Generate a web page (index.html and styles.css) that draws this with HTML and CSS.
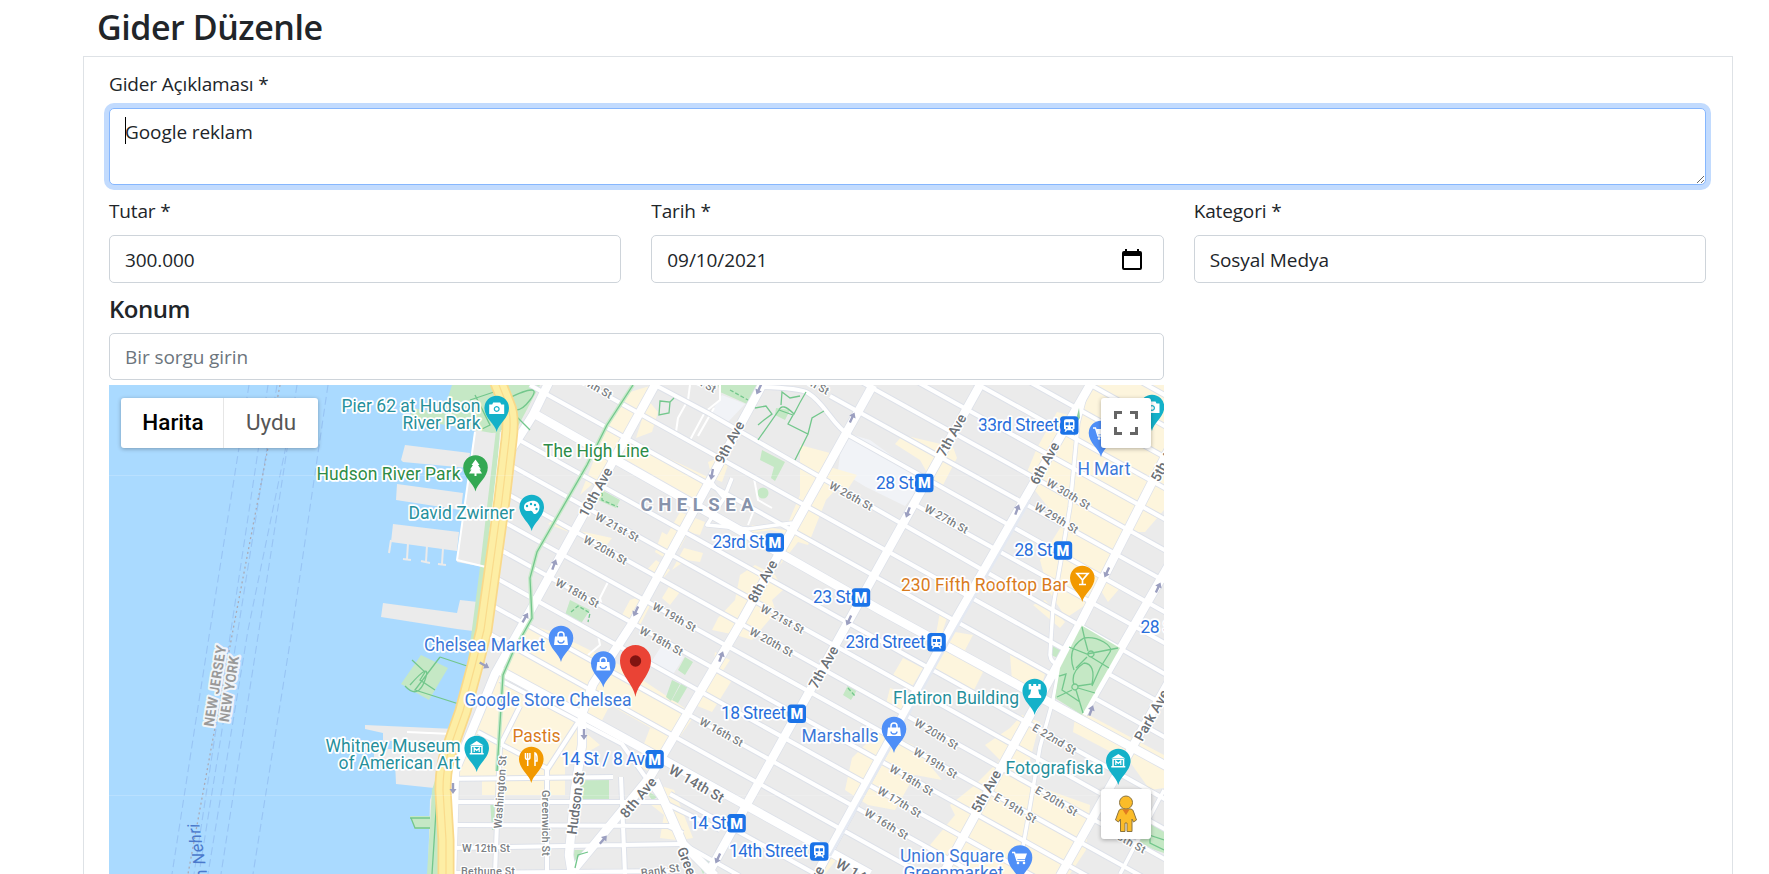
FILE: index.html
```html
<!DOCTYPE html>
<html lang="tr">
<head>
<meta charset="utf-8">
<title>Gider Düzenle</title>
<link rel="stylesheet" href="styles.css">
</head>
<body>
<main class="page">
<h1 class="title">Gider Düzenle</h1>
<form class="card">
  <div class="field">
    <label class="label" for="desc">Gider Açıklaması *</label>
    <div class="area-wrap"><textarea id="desc" class="control area">Google reklam</textarea><span class="caret"></span></div>
  </div>
  <div class="row">
    <div class="field"><label class="label">Tutar *</label><div class="control">300.000</div></div>
    <div class="field"><label class="label">Tarih *</label><div class="control date"><span class="date-text">09/10/2021</span>
      <svg width="20" height="21" viewBox="0 0 20 21"><path d="M0 4a2 2 0 0 1 2-2h1V0h2v2h10V0h2v2h1a2 2 0 0 1 2 2v15a2 2 0 0 1-2 2H2a2 2 0 0 1-2-2zM2 7v12h16V7z"/></svg></div></div>
    <div class="field"><label class="label">Kategori *</label><div class="control">Sosyal Medya</div></div>
  </div>
  <div class="location">
    <h2 class="subtitle">Konum</h2>
    <div class="control search">Bir sorgu girin</div>
    <div class="map">
<svg class="map-svg" viewBox="109 385 1055 489" width="1055" height="489">
<defs>
  <path id="pin" d="M0 24C-1.500 16-12.300 10-12.300 0A12.300 12.300 0 0 1 12.300 0C12.300 10 1.500 16 0 24z"/>
  <g id="metro"><rect width="18.500" height="18.500" rx="3.500"/><text class="m" x="9.250" y="14.500">M</text></g>
  <g id="bus"><rect width="18.500" height="18.500" rx="3.500"/><path fill="#fff" fill-rule="evenodd" d="M6 3h6.500a2 2 0 0 1 2 2v7.500l-1.500 1 1 2h-1.500l-1-1.500H7l-1 1.500H4.500l1-2-1.500-1V5a2 2 0 0 1 2-2zM5.500 6v3h3.200V6zM9.800 6v3H13V6zM6 10.700v1.600h1.600v-1.600zM11 10.700v1.600h1.600v-1.600z"/></g>
  <g id="bag"><path d="M-6-2.500H6L7 6H-7z" fill="#fff"/><path d="M-3-2v-2a3 3 0 0 1 6 0v2" fill="none" stroke="#fff" stroke-width="1.500"/><path d="M-3 1.500a3 2.500 0 0 0 6 0" fill="none" stroke="#4f8ff7" stroke-width="1.300"/></g>
  <g id="cam"><path fill="#fff" fill-rule="evenodd" d="M-7.500-3.500h3l1-2h7l1 2h3V6h-15zM0-2a3 3 0 1 0 .01 0z"/><circle cy="1" r="1.800" fill="#fff"/></g>
  <g id="museum" fill="#fff"><path d="M-7-2.500 0-7l7 4.500z"/><path fill-rule="evenodd" d="M-6-2H6v7h1v1.500H-7V5h1zM-4.500-1v6h9v-6z"/><path d="M-2.500 4V0L0 2.500 2.500 0v4" fill="none" stroke="#fff" stroke-width="1.200"/></g>
  <g id="cart"><path d="M-8-5h2.500L-3 3h8" fill="none" stroke="#fff" stroke-width="1.400"/><path d="M-5-4H7L5 1.500h-8z" fill="#fff"/><circle cx="-2" cy="5.500" r="1.300" fill="#fff"/><circle cx="4" cy="5.500" r="1.300" fill="#fff"/></g>
  <path id="arr" d="M-1.200 5V-1H-3.500L0-6 3.500-1H1.200V5z" fill="#9b9fc0"/>
  <g id="cross">
    <path d="M490 634 1170 1012M493 606 1170 982M496 578 1170 952M499 549 1170 922M502 521 1170 892M504 492 1170 862M510 465 1170 832M512 436 1170 802M530 385 1170 740M588 385 1170 708M655 385 708 413 820 477 1170 677M912 503 1170 646M760 387Q800 388 808 393C825 403 832 425 850 436L1170 615M830 396 1170 584M856 379 1170 553M912 379 1170 522M968 379 1170 491M1024 379 1170 460M1080 379 1170 429M1136 379 1170 398"/>
    <path d="M670 794 830 882M683 844 740 876M668 826 683 833M437 779 613 777M452 802H663M455 825 672 826M452 848 680 844M452 873 680 871M500 747 495 874M547 768V874M621 777 625 874M500 680 622 744 663 802 720 830M478 732 548 769M520 706 500 746M582 716 547 770"/>
  </g>
  <g id="wide"><path d="M533 413 880 610 1170 768M495 668 580 714 653 754 870 874"/></g>
  <g id="ave">
    <path d="M550 380 533 415 511 450M655 385 523 624 495 674 480 711 455 771 452 874M762 385 632 624 593 684 582 714 582 745 575 790 569 855 572 874M873 385 740 624 650 777 570 874M655 780 683 844 715 876M980 385 847 624 743 811 708 874M1090 385 953 624 820 868M1170 447 1080 624 943 874M1170 563 1083 714M1170 680 1060 876"/>
  </g>
  <g id="thin"><path d="M1088 385 1078 423 1070 507 1053 607 1050 655Q1051 664 1060 664L1053 700 1040 747 1027 824 1018 874M1164 790 1120 874M732 478 724 498 707 525 748 529 792 523M708 478 724 498"/></g>
</defs>
<rect x="109" y="385" width="1055" height="489" fill="#aadaff"/>
<g class="ferry">
  <path d="M249 385 210 630 172 874M268 385 228 650 194 874M277 385 238 630 199 874M286 446 248 630 208 874M297 385 259 630 221 874M328 385 292 630 253 874"/>
  <path class="border" d="M280 385 233 630 188 874"/>
</g>
<path fill="#ebebeb" d="M474 385H1164V874H428L430 800 434 788 396 784 395 762 374 760V749H399V741H383V733L365 729V725L455 729 465 690 473 640 484 567 457 562 475 428zM405 445 470 453 468 468 403 462 401 460zM397 484 463 493 461 510 396 500zM393 524 459 532 457 551 391 542zM383 603 457 613 460 600 478 602 473 631 457 629 381 617z"/>
<path fill="none" stroke="#ebebeb" stroke-width="2" d="M391 540 389 553M408 543 407 559M403 559 411 560M427 545 426 562M421 561 430 563M443 548 442 564M438 564 446 565"/>
<path fill="#f1f3f7" d="M722 395 745 404 728 422 708 417zM843 432 870 440 925 480 905 506 866 487 838 470zM662 645 684 657 672 676 650 664z"/>
<g fill="#fdf5dd">
  <path d="M630 392 653 385 640 415 606 472 580 495 590 470 606 428zM648 400 658 412 652 432 636 438zM630 440 710 478 702 503 618 455zM708 462 716 459 728 465 722 482 712 478zM553 520 575 530 612 538 606 546 590 540 548 524z"/>
  <path d="M800 445 830 453 823 465 857 475 846 492 838 487 826 500 818 520 808 545 798 542 780 565 790 535 772 530 750 533 752 525 785 530 800 495zM680 512 705 522 700 535 688 532 680 548 664 540zM662 532 680 542 665 558 655 552zM684 548 703 553 700 562 686 560 672 570zM656 560 670 570 660 582 645 572zM670 585 680 592 670 605 662 598zM645 595 652 602 640 625 622 615 630 600zM755 565 775 575 783 590 772 600 776 612 752 640 736 635 712 630 718 618 735 600 740 575zM715 652 730 660 722 672 732 680 712 712 695 705 712 680z"/>
  <path d="M903 435 953 447 957 458 943 485 930 478 920 460 895 444zM1027 472 1037 448 1057 412 1080 418 1090 385H1164V510L1145 532H1127L1090 602 1066 618 1048 590 1040 560 1062 525 1033 488zM1033 605 1045 600 1065 622 1060 628zM1093 578 1120 588 1108 602zM940 612 948 615 943 630 973 635 965 650 983 672 973 692 930 668 935 640zM903 658 923 668 910 690 893 675z"/>
  <path d="M530 625 553 632 620 665 695 715 676 742 610 705 598 728 565 715 600 745 565 765 565 795H482V778H458L478 705 505 660zM650 728 672 738 657 775 636 765zM658 785 674 790 693 838 680 840zM645 800 668 808 676 840 660 838 664 815z"/>
  <path d="M1010 655 1045 674 1038 697 1012 680zM1022 715 1040 722 1030 760 1020 780 1090 805 1086 850 1070 874H960L930 845 955 815 950 805 975 785 1000 760 985 745 1010 728zM1075 718 1085 713 1164 755V788L1150 790 1130 762 1073 732zM852 758 880 730 913 745 942 780 915 775 895 810 868 805 845 790zM890 688 912 695 905 712 886 704zM825 850 840 855 825 874H812z"/>
</g>
<g fill="#c5e8c5">
  <path d="M452 385H540L516 430 492 433 440 424 410 418 412 408 443 413zM500 430 490 567 483 640 468 700 455 735 440 780 440 874H427L432 790 450 735 468 660 480 567 496 430zM718 385H760L747 404 720 392zM762 450 785 462 775 481 771 478 774 467 760 460zM776 408 790 410 785 420 775 415zM602 490 620 500 616 508 598 500z"/><circle cx="763" cy="493" r="5.500"/>
  <path d="M421 655 448 668 429 700 401 684zM580 780H609V800H582zM685 657 693 662 685 675 678 670zM672 680 680 684 671 701 666 697zM682 682 688 686 678 703 672 700zM848 685 857 690 851 700 843 695zM410 816H430V829H415zM1150 820 1164 830V853L1140 845 1132 835zM570 850 590 850 575 872zM645 790 658 797 652 800zM693 850 712 862 703 874zM570 600 590 610 580 625 565 615zM490 800 500 800 495 830 492 830zM1052 640 1062 648 1058 658 1051 655z"/>
</g>
<g class="streets">
  <path class="tiny" d="M475 432 457 560 486 567M502 430 486 570M407 732 452 734M690 385 688 400 678 418 676 432M720 385 720 400 705 412 690 440M714 408 698 436M754 478 758 500 772 508M754 510 748 525M608 582 600 598 602 606M598 635 600 645 588 655"/>
  <g class="case"><use href="#cross" stroke-width="6"/><use href="#thin" stroke-width="5"/><use href="#wide" stroke-width="10"/><use href="#ave" stroke-width="10"/></g>
  <g class="fill"><use href="#cross" stroke-width="4"/><use href="#thin" stroke-width="3.500"/><use href="#wide" stroke-width="8.500"/><use href="#ave" stroke-width="8.500"/></g>
  <path fill="none" stroke="#e4e9f2" stroke-width="2.500" d="M1030 500 953 634 870 784 830 856"/>
</g>
<path fill="#c5e8c5" d="M1081.700 625.500 1120 648 1082 715 1055 698 1060 668z"/>
<path fill="#8fd0a0" d="M1079 408 1080 418 1075 424z"/>
<path class="highline" d="M633 385 607 425 587 465 560 512 537 552 530 578 532 618 513 652 503 675 497 771"/>
<g class="trail">
  <path d="M504 433 488 570 480 635 470 695 452 740 438 780 432 874M633 385 607 425 587 465 560 512 537 552 530 578 532 618 513 652 503 675 497 771M440 657 470 667M440 657 415 690 462 705M405 686Q418 700 425 680T410 685M412 660 425 672 420 680 435 690M475 395 490 425 480 430M470 400 500 390M505 400Q515 420 530 400T505 400M515 415 530 430"/>
  <path d="M758 440 779 410Q782 402 794 414 800 402 806 392M779 410 793 415 788 424 808 434 812 418 824 411M808 434 795 460M781 405 782 392 790 398 800 396M755 408 766 406 772 414 764 420 758 425M660 401 670 402 669 413 659 415zM670 402 674 398"/>
  <path d="M1082 627 1085 640 1088 651M1069 647 1087 654 1118 648M1091 657 1109 668M1087 657 1076 668M1084 638Q1066 648 1074 670M1084 638C1098 636 1114 646 1110 652L1100 668 1092 686M1084 663Q1070 672 1074 685M1084 663Q1096 664 1092 684L1078 686M1057 697 1072 690M1076 690 1083 713M1078 688 1095 693M1059 676 1066 674 1062 690 1080 702M1091 651a3 3 0 1 1-.1 0zM1075 684a3 3 0 1 1-.1 0zM1150 825V843L1164 850M1140 832 1164 840M575 868 578 855 588 852M410 818H430M430 828 415 828 411 818"/>
  <path stroke-dasharray="4 2" d="M602 492V500L618 507M571 612 578 606 590 613 588 622M848 688 855 696M730 390 748 400"/>
</g>
<g class="highway">
  <path stroke="#f9d98a" stroke-width="17" d="M497 380 507 405Q512 415 509 440L502 500 484 630 475 666 463 711 450 748Q443 765 443 790L446 840V880"/>
  <path stroke="#fdeea5" stroke-width="13.500" d="M497 380 507 405Q512 415 509 440L502 500 484 630 475 666 463 711 450 748Q443 765 443 790L446 840V880"/>
  <path stroke="#fadb8c" stroke-width="1.200" d="M497 380 507 405Q512 415 509 440L502 500 484 630 475 666 463 711 450 748Q443 765 443 790L446 840V880"/>
</g>
<path stroke="#fff" stroke-opacity=".18" d="M109 475.500H1164M109 795.500H1164"/>
<g>
  <use href="#arr" transform="translate(759 389) rotate(205)"/><use href="#arr" transform="translate(712 474) rotate(190)"/><use href="#arr" transform="translate(852 418) rotate(25)"/><use href="#arr" transform="translate(554 565) rotate(20)"/><use href="#arr" transform="translate(525 618) rotate(30)"/><use href="#arr" transform="translate(636 611) rotate(205)"/><use href="#arr" transform="translate(849 620) rotate(205)"/><use href="#arr" transform="translate(908 512) rotate(200)"/><use href="#arr" transform="translate(1017 510) rotate(20)"/><use href="#arr" transform="translate(1107 572) rotate(205)"/><use href="#arr" transform="translate(1158 588) rotate(25)"/><use href="#arr" transform="translate(721 657) rotate(20)"/><use href="#arr" transform="translate(484 665) rotate(120)"/><use href="#arr" transform="translate(584 734) rotate(180)"/><use href="#arr" transform="translate(453 788) rotate(180)"/><use href="#arr" transform="translate(603 840) rotate(40)"/><use href="#arr" transform="translate(718 858) rotate(205)"/><use href="#arr" transform="translate(1091 711) rotate(20)"/>
</g>
<g class="st">
  <text transform="translate(851.700 495) rotate(29)" textLength="48" y="5">W 26th St</text>
  <text transform="translate(617.700 526) rotate(29)" textLength="48" y="5">W 21st St</text>
  <text transform="translate(606 549) rotate(29)" textLength="48" y="5">W 20th St</text>
  <text transform="translate(578 592) rotate(29)" textLength="48" y="5">W 18th St</text>
  <text transform="translate(675 616) rotate(29)" textLength="48" y="5">W 19th St</text>
  <text transform="translate(783 618) rotate(29)" textLength="48" y="5">W 21st St</text>
  <text transform="translate(662 640) rotate(29)" textLength="48" y="5">W 18th St</text>
  <text transform="translate(772 641) rotate(29)" textLength="48" y="5">W 20th St</text>
  <text transform="translate(722 731) rotate(29)" textLength="48" y="5">W 16th St</text>
  <text transform="translate(947 518) rotate(29)" textLength="48" y="5">W 27th St</text>
  <text transform="translate(1069 493) rotate(31)" textLength="49" y="5">W 30th St</text>
  <text transform="translate(1057 517) rotate(31)" textLength="49" y="5">W 29th St</text>
  <text transform="translate(937 733) rotate(31)" textLength="49" y="5">W 20th St</text>
  <text transform="translate(936 762) rotate(31)" textLength="49" y="5">W 19th St</text>
  <text transform="translate(912 779) rotate(31)" textLength="49" y="5">W 18th St</text>
  <text transform="translate(900 801) rotate(31)" textLength="49" y="5">W 17th St</text>
  <text transform="translate(887 823) rotate(31)" textLength="49" y="5">W 16th St</text>
  <text transform="translate(1055 738) rotate(31)" textLength="49" y="5">E 22nd St</text>
  <text transform="translate(1057 800) rotate(31)" textLength="47" y="5">E 20th St</text>
  <text transform="translate(1016 807) rotate(31)" textLength="47" y="5">E 19th St</text>
  <text transform="translate(1125 838) rotate(29)" textLength="47" y="5">E 18th St</text>
  <text transform="translate(591 383) rotate(29)" textLength="48" y="5">W 24th St</text>
  <text transform="translate(695 377) rotate(29)" textLength="48" y="5">W 26th St</text>
  <text transform="translate(808 379) rotate(29)" textLength="48" y="5">W 28th St</text>
  <text x="462" y="852" class="start" textLength="48">W 12th St</text>
  <text x="461" y="875" class="start" textLength="54">Bethune St</text>
  <text transform="translate(660 869) rotate(-8)" textLength="39" y="5">Bank St</text>
  <text transform="translate(500 792) rotate(-86)" textLength="73" y="4">Washington St</text>
  <text transform="translate(546 823) rotate(90)" textLength="66" y="4">Greenwich St</text>
</g>
<g class="av">
  <text transform="translate(575 803) rotate(-83)" textLength="63" y="5.500">Hudson St</text>
  <text transform="translate(637.700 797) rotate(-50)" textLength="48" y="5.500">8th Ave</text>
  <text transform="translate(762 581) rotate(-61)" textLength="46" y="5.500">8th Ave</text>
  <text transform="translate(729 442) rotate(-61)" textLength="46" y="5.500">9th Ave</text>
  <text transform="translate(595 492) rotate(-61)" textLength="54" y="5.500">10th Ave</text>
  <text transform="translate(951 435) rotate(-61)" textLength="46" y="5.500">7th Ave</text>
  <text transform="translate(1044 463) rotate(-61)" textLength="46" y="5.500">6th Ave</text>
  <text transform="translate(1165 460) rotate(-61)" textLength="46" y="5.500">5th Ave</text>
  <text transform="translate(823 667) rotate(-61)" textLength="46" y="5.500">7th Ave</text>
  <text transform="translate(809 887) rotate(-61)" textLength="46" y="5.500">6th Ave</text>
  <text transform="translate(985.700 791) rotate(-61)" textLength="46" y="5.500">5th Ave</text>
  <text transform="translate(1151 715) rotate(-61)" textLength="56" y="5.500">Park Ave</text>
  <text transform="translate(697 783) rotate(30)" textLength="61" y="5.500">W 14th St</text>
  <text transform="translate(864 877) rotate(30)" textLength="61" y="5.500">W 14th St</text>
  <text transform="translate(699 890) rotate(68)" textLength="92" y="5.500">Greenwich Ave</text>
</g>
<g class="state">
  <text transform="translate(215 686) rotate(-81)" textLength="82" y="5">NEW JERSEY</text>
  <text transform="translate(229 689) rotate(-81)" textLength="67" y="5">NEW YORK</text>
</g>
<text class="river" transform="translate(199 823) rotate(-99)" textLength="106">Hudson Nehri</text>
<text class="hood" x="640.500" y="511" textLength="113">CHELSEA</text>
<g fill="#14b1c9"><use href="#pin" x="496.700" y="408"/><use href="#pin" x="531.700" y="507"/><use href="#pin" x="1152" y="407"/><use href="#pin" x="476.700" y="748"/><use href="#pin" x="1034.700" y="691"/><use href="#pin" x="1118.300" y="761"/></g>
<g fill="#4f8ff7"><use href="#pin" x="1101" y="433"/><use href="#pin" x="561" y="638"/><use href="#pin" x="603.300" y="663.500"/><use href="#pin" x="894" y="729"/><use href="#pin" x="1020" y="857.500"/></g>
<use href="#pin" x="475.500" y="467.500" fill="#34a853"/>
<g fill="#f29900"><use href="#pin" x="1082.300" y="578"/><use href="#pin" x="531.300" y="759"/></g>
<use href="#cam" x="496.700" y="408"/><use href="#cam" x="1152" y="407"/>
<use href="#bag" x="561" y="639"/><use href="#bag" x="603.300" y="664.500"/><use href="#bag" x="894" y="730"/>
<use href="#cart" x="1101" y="433"/><use href="#cart" x="1020" y="857.500"/>
<use href="#museum" x="476.700" y="748"/><use href="#museum" x="1118.300" y="761"/>
<path fill="#fff" d="M475.500 459.500 479.500 465H478L481 469.500H479.500L482 473.500H476.500V476H474.500V473.500H469L471.500 469.500H470L473 465H471.500z"/>
<path fill="#fff" fill-rule="evenodd" d="M531 501c5-1 8.500 2 8.500 6 0 5-4 8.500-6 6.500-1.500-2-1-3-4-2.500-4 .5-5.500-1-5.500-4 0-3.500 3-5.500 7-6z"/><g fill="#14b1c9"><circle cx="527" cy="506" r="1.200"/><circle cx="531" cy="504" r="1.200"/><circle cx="535" cy="505" r="1.200"/><circle cx="536.500" cy="509" r="1.200"/></g>
<path fill="none" stroke="#fff" stroke-width="1.700" d="M1077 573.500H1088L1082.500 580zM1082.500 579V584M1079 584.500H1086"/>
<path fill="none" stroke="#fff" stroke-width="1.500" d="M525.500 753v4.500q0 2 2.200 2t2.200-2V753M527.700 753V766M535 766V753q2.500 1 2 8h-2"/>
<path fill="#fff" d="M1028.700 684h2.500v2h2v-2h3v2h2v-2h2.500v5.500h-2.500l1 4.500 2 2v2h-13v-2l2-2 1-4.500h-2.500z"/>
<g fill="#1a73e8"><use href="#metro" x="765.500" y="533.300"/><use href="#metro" x="851.700" y="588.300"/><use href="#metro" x="915" y="473.800"/><use href="#metro" x="1053.700" y="541.300"/><use href="#metro" x="645.300" y="750"/><use href="#metro" x="787.500" y="704.500"/><use href="#metro" x="727.300" y="814"/><use href="#bus" x="1060" y="416.300"/><use href="#bus" x="810" y="842.300"/><use href="#bus" x="927.300" y="633"/></g>
<g class="poi">
  <g fill="#26909c"><text x="341.500" y="411.700" textLength="139">Pier 62 at Hudson</text><text x="402.500" y="428.500" textLength="78">River Park</text><text x="408.500" y="519" textLength="106">David Zwirner</text><text x="325.500" y="752" textLength="135">Whitney Museum</text><text x="338.500" y="769" textLength="122">of American Art</text><text x="893" y="703.700" textLength="126">Flatiron Building</text><text x="1005.500" y="773.700" textLength="98">Fotografiska</text></g>
  <g fill="#2d8c47"><text x="316.500" y="480" textLength="144">Hudson River Park</text><text x="543" y="457" textLength="106">The High Line</text></g>
  <g fill="#d97b1c"><text x="901" y="590.500" textLength="167">230 Fifth Rooftop Bar</text><text x="512.500" y="741.700" textLength="48">Pastis</text></g>
  <g fill="#3c78d8"><text x="1077.500" y="475.300" textLength="53">H Mart</text><text x="424" y="650.700" textLength="121">Chelsea Market</text><text x="464.500" y="706.300" textLength="167">Google Store Chelsea</text><text x="801.500" y="742" textLength="77">Marshalls</text><text x="900" y="862" textLength="104">Union Square</text><text x="903.500" y="878.500" textLength="100">Greenmarket</text></g>
  <g fill="#2a6fdb"><text x="712.500" y="548.300" textLength="52">23rd St</text><text x="813" y="603" textLength="38">23 St</text><text x="876" y="488.700" textLength="38">28 St</text><text x="978" y="431.300" textLength="81">33rd Street</text><text x="1014.500" y="556.300" textLength="38">28 St</text><text x="1140.500" y="633" textLength="38">28 St</text><text x="561" y="765" textLength="84">14 St / 8 Av</text><text x="721" y="719" textLength="65">18 Street</text><text x="689.500" y="828.700" textLength="37">14 St</text><text x="729" y="857.300" textLength="79">14th Street</text><text x="845.500" y="648" textLength="80">23rd Street</text></g>
</g>
<path fill="#ea4335" d="M635.500 697C633.500 684 620 675 620 660.500A15.500 15.500 0 0 1 651 660.500C651 675 637.500 684 635.500 697z"/><circle cx="635.500" cy="661" r="5.700" fill="#811411"/>
</svg>
      <div class="map-type"><span class="type active">Harita</span><span class="type">Uydu</span></div>
      <div class="map-btn full"><svg width="24" height="24" viewBox="0 0 24 24"><path d="M1.500 8V1.500H8M16 1.500h6.500V8M22.500 16v6.500H16M8 22.500H1.500V16" fill="none" stroke="#666" stroke-width="3"/></svg></div>
      <div class="map-btn pegman"><svg width="22" height="38" viewBox="0 0 22 38"><g fill="#fbbc29" stroke="#8b7440" stroke-width="1"><path d="M6 14H16Q18 14 19 18L21.500 25 18.500 27 17 24V36.500H12V28H10V36.500H5.500V24L3.500 27 .5 25 3 18Q4 14 6 14z"/><circle cx="11" cy="7.500" r="6.500"/></g><path d="M7.500 14.500h7L11 20z" fill="#e07a20"/></svg></div>
    </div>
  </div>
</form>
</main>
</body>
</html>
```

FILE: styles.css
```css
* { box-sizing: border-box; }
html { overflow: hidden; }
body {
  margin: 0;
  height: 874px;
  overflow: hidden;
  background: #fff;
  color: #212529;
  font: 400 19px/30px "Open Sans", "Noto Sans", sans-serif;
  letter-spacing: -0.08px;
}
.page { width: 1650px; height: 874px; margin-left: 83px; overflow: hidden; }
.title {
  margin: 0;
  height: 56px;
  padding: 6px 0 0 14px;
  font-size: 34px;
  font-weight: 600;
  line-height: 42px;
  letter-spacing: -0.45px;
}
.card {
  height: 818px;
  padding: 11px 26px 0 25px;
  border: 1px solid #dee2e6;
  border-bottom: 0;
}
.field { display: flex; flex-direction: column; min-width: 0; }
.label { display: block; margin-bottom: 9px; padding-top: 1px; height: 31px; letter-spacing: -0.15px; }
.control {
  height: 48px;
  padding: 9px 15px 7px;
  border: 1px solid #ced4da;
  border-radius: 5px;
  background: #fff;
}
.area-wrap { position: relative; height: 77px; margin-bottom: 10px; }
.area {
  display: block;
  width: 100%;
  height: 77px;
  margin: 0;
  padding-top: 8px;
  font: inherit;
  letter-spacing: inherit;
  color: inherit;
  outline: 0;
  resize: vertical;
  border-color: #86b7fe;
  box-shadow: 0 0 0 5px #c2dbfe;
}
.caret { position: absolute; left: 16px; top: 9px; width: 1px; height: 27px; background: #000; }
.row { display: grid; grid-template-columns: repeat(3, 1fr); gap: 30px; }
.date { display: flex; justify-content: space-between; align-items: center; padding: 8px 21px 8px 15px; }
.date-text { padding-top: 1px; }
.location { width: 1055px; }
.subtitle {
  margin: 10px 0;
  height: 30px;
  padding-top: 1px;
  font-size: 24px;
  font-weight: 600;
  line-height: 30px;
  letter-spacing: -0.5px;
}
.search { height: 47px; padding-top: 8px; color: #6c757d; }
.map { position: relative; height: 489px; margin-top: 5px; overflow: hidden; font-family: Roboto, sans-serif; letter-spacing: 0; }
.map-svg { display: block; }
.map-svg text { stroke-linejoin: round; paint-order: stroke; }
.ferry { fill: none; stroke: #98c4f4; stroke-width: 1.1; stroke-dasharray: 8 4; }
.border { stroke: #a9abb8; stroke-width: 1.3; stroke-dasharray: 2 3; }
.highline { fill: none; stroke: #c9eacb; stroke-width: 4; }
.trail { fill: none; stroke: #73c78c; stroke-width: 1.3; }
.streets { fill: none; stroke-linejoin: round; }
.case { stroke: #dde1e9; }
.fill { stroke: #fff; }
.tiny { stroke: #fff; stroke-width: 2; }
.highway { fill: none; stroke-linejoin: round; }
.st { font-size: 11px; font-weight: 500; fill: #7b7f84; stroke: #fff; stroke-width: 2.5; text-anchor: middle; }
.start { text-anchor: start; }
.av { font-size: 14px; font-weight: 500; fill: #6b7076; stroke: #fff; stroke-width: 3; text-anchor: middle; }
.state { font-size: 14px; font-weight: 700; fill: #999; stroke: #f0f4f8; stroke-width: 4; text-anchor: middle; }
.river { font-size: 17px; font-style: italic; fill: #4a79cc; text-anchor: end; }
.hood { font-size: 18.5px; font-weight: 700; fill: #8793ab; stroke: #fff; stroke-width: 3; }
.poi { font-size: 17.5px; font-weight: 400; stroke: #fff; stroke-width: 3.5; }
.m { font-size: 14.5px; font-weight: 900; fill: #fff; text-anchor: middle; }
.map-type {
  position: absolute;
  left: 12px;
  top: 13px;
  display: flex;
  width: 197px;
  height: 50px;
  border-radius: 3px;
  background: #fff;
  box-shadow: 0 1px 4px rgba(0, 0, 0, 0.3);
  font-size: 22.5px;
  line-height: 49px;
  color: #565656;
}
.type { width: 94px; text-align: center; }
.active { width: 103px; padding-left: 2px; border-right: 1px solid #e6e6e6; font-weight: 500; color: #000; }
.map-btn {
  position: absolute;
  right: 13px;
  width: 50px;
  height: 50px;
  display: flex;
  align-items: center;
  justify-content: center;
  border-radius: 3px;
  background: #fff;
  box-shadow: 0 1px 4px rgba(0, 0, 0, 0.3);
}
.full { top: 13px; }
.pegman { top: 404px; }
```
